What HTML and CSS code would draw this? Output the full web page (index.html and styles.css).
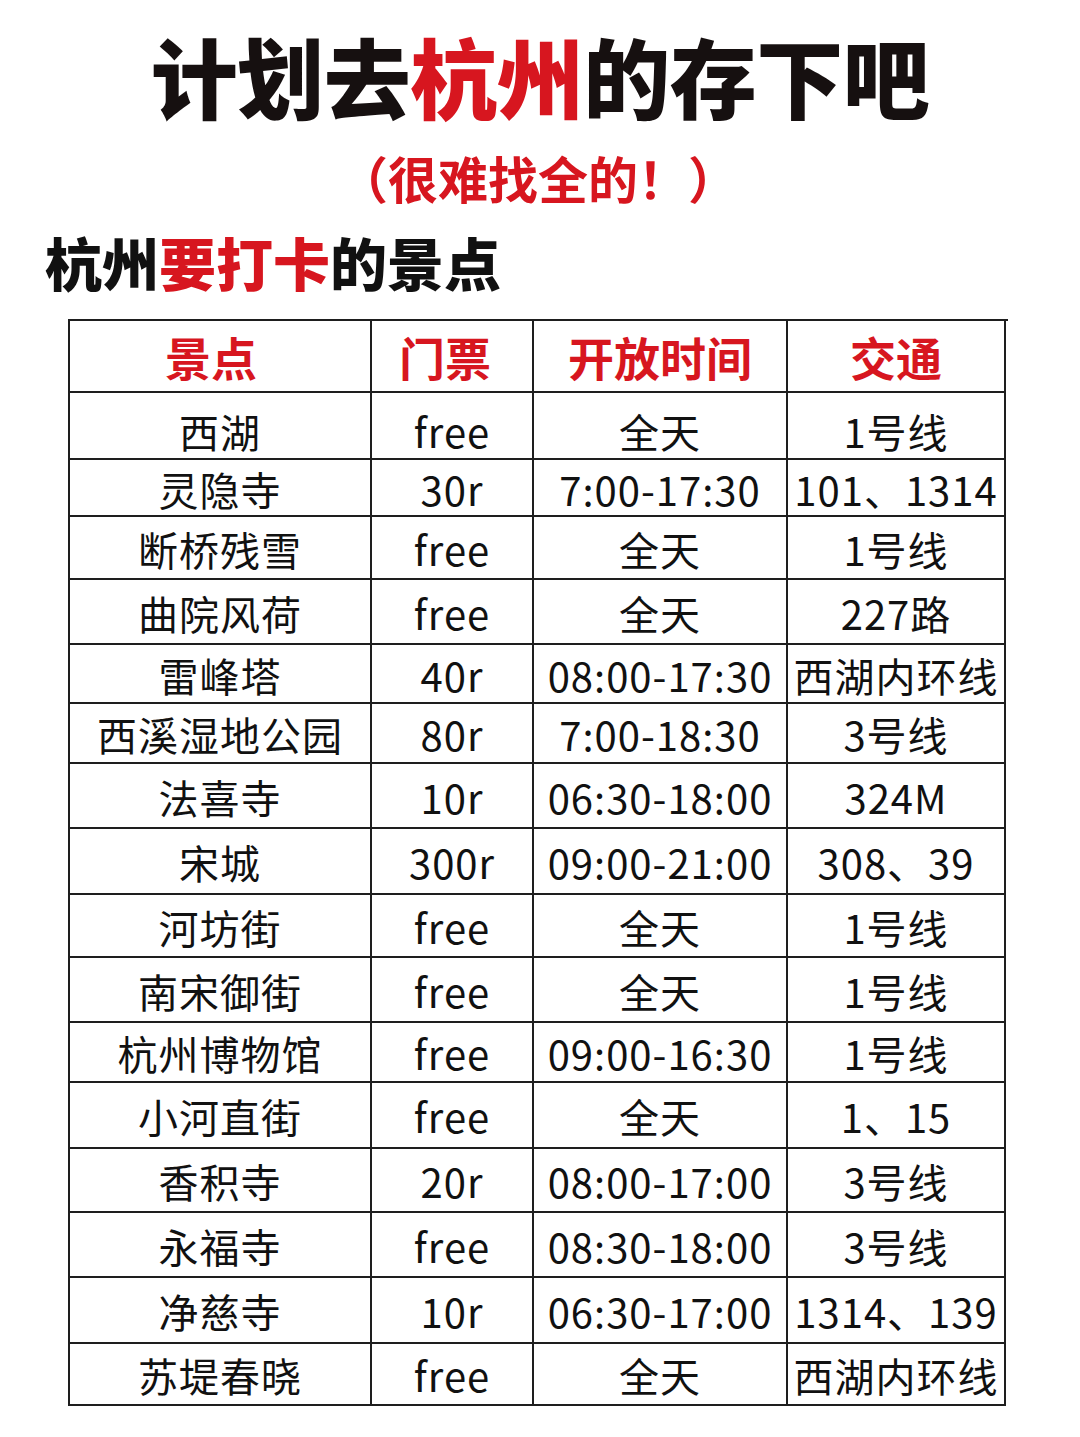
FILE: index.html
```html
<!DOCTYPE html>
<html lang="zh-CN">
<head>
<meta charset="utf-8">
<title>计划去杭州的存下吧</title>
<link rel="stylesheet" href="styles.css">
</head>
<body>
<div class="page">
  <h1 class="title">计划去<span class="red">杭州</span>的存下吧</h1>
  <p class="subtitle">（很难找全的！）</p>
  <h2 class="heading">杭州<span class="red">要打卡</span>的景点</h2>
  <div class="table">
    <div class="cell head h1">景点</div><div class="cell head h2">门票</div><div class="cell head">开放时间</div><div class="cell head">交通</div>
    <div class="cell first">西湖</div><div class="cell first">free</div><div class="cell first">全天</div><div class="cell first">1号线</div>
    <div class="cell">灵隐寺</div><div class="cell">30r</div><div class="cell">7:00-17:30</div><div class="cell">101、1314</div>
    <div class="cell">断桥残雪</div><div class="cell">free</div><div class="cell">全天</div><div class="cell">1号线</div>
    <div class="cell">曲院风荷</div><div class="cell">free</div><div class="cell">全天</div><div class="cell">227路</div>
    <div class="cell">雷峰塔</div><div class="cell">40r</div><div class="cell">08:00-17:30</div><div class="cell">西湖内环线</div>
    <div class="cell">西溪湿地公园</div><div class="cell">80r</div><div class="cell">7:00-18:30</div><div class="cell">3号线</div>
    <div class="cell">法喜寺</div><div class="cell">10r</div><div class="cell">06:30-18:00</div><div class="cell">324M</div>
    <div class="cell">宋城</div><div class="cell">300r</div><div class="cell">09:00-21:00</div><div class="cell">308、39</div>
    <div class="cell">河坊街</div><div class="cell">free</div><div class="cell">全天</div><div class="cell">1号线</div>
    <div class="cell">南宋御街</div><div class="cell">free</div><div class="cell">全天</div><div class="cell">1号线</div>
    <div class="cell">杭州博物馆</div><div class="cell">free</div><div class="cell">09:00-16:30</div><div class="cell">1号线</div>
    <div class="cell">小河直街</div><div class="cell">free</div><div class="cell">全天</div><div class="cell">1、15</div>
    <div class="cell">香积寺</div><div class="cell">20r</div><div class="cell">08:00-17:00</div><div class="cell">3号线</div>
    <div class="cell">永福寺</div><div class="cell">free</div><div class="cell">08:30-18:00</div><div class="cell">3号线</div>
    <div class="cell">净慈寺</div><div class="cell">10r</div><div class="cell">06:30-17:00</div><div class="cell">1314、139</div>
    <div class="cell">苏堤春晓</div><div class="cell">free</div><div class="cell">全天</div><div class="cell">西湖内环线</div>
  </div>
</div>
</body>
</html>
```

FILE: styles.css
```css
html, body {
  margin: 0;
  padding: 0;
  background: #ffffff;
}

body {
  font-family: "Noto Sans CJK SC", "Noto Sans", sans-serif;
  color: #111111;
}

.page {
  width: 1080px;
  height: 1437px;
  overflow: hidden;
}

.red {
  color: #d7161f;
}

.title {
  margin: 32px 0 0 0;
  font-size: 87px;
  line-height: 87px;
  font-weight: 900;
  text-align: center;
  color: #161010;
  letter-spacing: -0.5px;
}

.subtitle {
  margin: 33px 0 0 0;
  font-size: 50px;
  line-height: 50px;
  font-weight: 700;
  text-align: center;
  color: #d7161f;
  padding-right: 4px;
}

.heading {
  margin: 31px 0 0 0;
  padding-left: 45px;
  font-size: 57px;
  line-height: 57px;
  font-weight: 900;
  color: #111111;
}

.table {
  margin: 29px 0 0 68px;
  width: 938px;
  display: grid;
  grid-template-columns: 302px 162px 254px 218px;
  grid-template-rows: 72px 67px 57px 63px 65px 59px 60px 65px 66px 63px 65px 60px 66px 64px 65px 66px 62px;
  border-top: 2px solid #1e1e1e;
  border-left: 2px solid #1e1e1e;
}

.cell {
  box-sizing: border-box;
  border-right: 2px solid #1e1e1e;
  border-bottom: 2px solid #1e1e1e;
  display: flex;
  align-items: center;
  justify-content: center;
  font-size: 40px;
  font-weight: 400;
  letter-spacing: 1px;
  white-space: nowrap;
  color: #111111;
  padding-top: 2px;
}

.cell.first {
  padding-top: 10px;
}

.cell.head {
  color: #d7161f;
  font-size: 46px;
  font-weight: 700;
  letter-spacing: 0;
  padding-top: 0;
}

.cell.head.h1 {
  padding-right: 18px;
}

.cell.head.h2 {
  padding-right: 14px;
}
```
